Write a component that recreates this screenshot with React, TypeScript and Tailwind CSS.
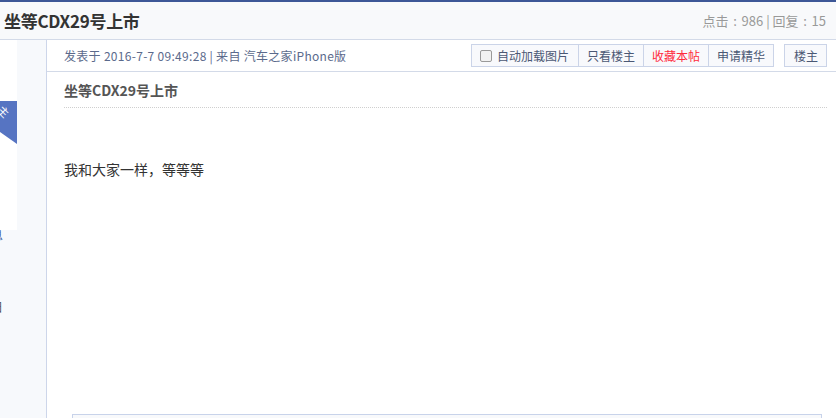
const font = "font-['Microsoft_YaHei','Noto_Sans_CJK_SC',sans-serif]";

const Colon = () => <span className="inline-block w-[1em] text-center">:</span>;

const Toolbar = () => (
  <div className="flex items-center gap-[10px]">
    <div className="flex h-[23px] border border-[#cbd4e8] bg-[#f8f9fc] text-[12px] text-[#4b5874]">
      <label className="flex items-center gap-[5px] pl-[8px] pr-[9px] border-r border-[#cbd4e8]">
        <span className="w-[12px] h-[12px] rounded-[2px] border border-[#9a9a9a] bg-[#f2f2f2]" />
        自动加载图片
      </label>
      <span className="flex items-center px-[8px] border-r border-[#cbd4e8]">只看楼主</span>
      <span className="flex items-center px-[8px] border-r border-[#cbd4e8] text-[#ff2b3b]">收藏本帖</span>
      <span className="flex items-center px-[8px]">申请精华</span>
    </div>
    <span className="flex items-center h-[23px] pl-[9px] pr-[8px] border border-[#cbd4e8] bg-[#f8f9fc] text-[12px] text-[#4b5874]">楼主</span>
  </div>
);

const Sidebar = () => (
  <div className="relative w-[47px] shrink-0 bg-[#f7f9fc] border-r border-[#cdd6ea] overflow-hidden">
    <div className="relative w-[17px] h-[190px] bg-white overflow-hidden">
      <div className="absolute left-0 top-[61px] w-[17px] h-[43px] bg-[#5674c2] [clip-path:polygon(0_0,100%_0,100%_100%,0_72%)]" />
      <span className="absolute left-[-2px] top-[66px] rotate-45 text-[11px] text-white leading-none">主</span>
    </div>
    <div className="ml-[-9px] mt-[-5px] text-[12px] text-[#3b5ca0] leading-[20px]">息</div>
    <div className="ml-[-9px] mt-[52px] text-[12px] text-[#555] leading-[20px]">日</div>
  </div>
);

export default function App() {
  return (
    <div className={`${font} w-[836px] h-[418px] overflow-hidden flex flex-col bg-white`}>
      <div className="h-[2px] bg-[#3d5797]" />
      <div className="h-[38px] flex items-center justify-between pl-[4px] pr-[10px] bg-[#f8f9fb] border-b border-[#d3dae8]">
        <h1 className="text-[17px] font-bold text-[#333] tracking-[-0.3px]">坐等CDX29号上市</h1>
        <span className="text-[13px] text-[#999]">
          点击<Colon />986 | 回复<Colon />15
        </span>
      </div>
      <div className="flex flex-1">
        <Sidebar />
        <div className="flex-1 flex flex-col">
          <div className="h-[32px] flex items-center justify-between pl-[17px] pr-[9px] border-b border-[#d3dae8]">
            <span className="text-[12px] text-[#5b6a8c] tracking-[0.3px]">发表于 2016-7-7 09:49:28 | 来自 汽车之家iPhone版</span>
            <Toolbar />
          </div>
          <div className="pl-[17px] pr-[9px] flex-1 flex flex-col">
            <h2 className="mt-[8px] pb-[6px] text-[14px] font-bold text-[#555] border-b border-dotted border-[#cfcfcf] leading-[21px]">坐等CDX29号上市</h2>
            <p className="mt-[51px] text-[14px] text-[#333] leading-[20px]">我和大家一样，等等等</p>
            <div className="flex-1" />
            <div className="ml-[8px] mr-[5px] h-[4px] border-t border-x border-[#c8d3ea] bg-[#f8f9fb]" />
          </div>
        </div>
      </div>
    </div>
  );
}
